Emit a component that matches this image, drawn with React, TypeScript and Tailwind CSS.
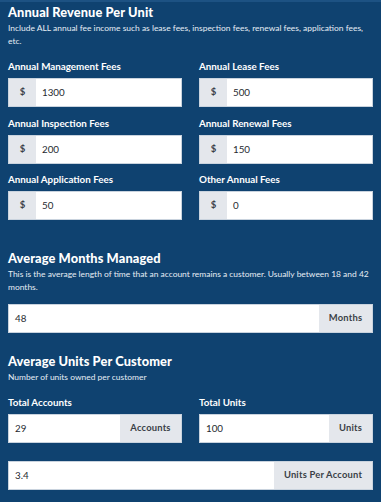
import React from "react";

const font = { fontFamily: "Lato, 'Open Sans', sans-serif" };

function Label({ children }: { children: React.ReactNode }) {
  return <div className="text-[9.8px] font-bold text-white leading-[14px] mb-[5px]">{children}</div>;
}

function PrefixInput({ value }: { value: string }) {
  return (
    <div className="flex h-[29px] border border-[#c9d3de] bg-white">
      <div className="w-[27px] bg-[#e4e7ec] flex items-center justify-center text-[9.5px] font-bold text-[#3a3f47]">$</div>
      <div className="flex-1 flex items-center pl-[6px] text-[9.8px] text-[#262a30]">{value}</div>
    </div>
  );
}

function SuffixInput({ value, suffix, sw }: { value: string; suffix: string; sw: string }) {
  return (
    <div className="flex h-[29px] border border-[#c9d3de] bg-white">
      <div className="flex-1 flex items-center pl-[6px] text-[9.8px] text-[#262a30]">{value}</div>
      <div className={`${sw} bg-[#e4e7ec] flex items-center justify-center text-[9.4px] font-bold text-[#3a3f47] tracking-[0.2px]`}>{suffix}</div>
    </div>
  );
}

function Heading({ children, className }: { children: React.ReactNode; className: string }) {
  return <h2 className={`text-[12.8px] font-black text-white leading-[20px] tracking-[0.1px] ${className}`}>{children}</h2>;
}

function Desc({ children }: { children: React.ReactNode }) {
  return <p className="text-[8.45px] text-[#e6edf5] leading-[13px]">{children}</p>;
}

export default function App() {
  return (
    <div style={font} className="w-[381px] h-[502px] bg-[#0f4270] border-t-2 border-[#1d5283] px-2 overflow-hidden">
      <Heading className="">Annual Revenue Per Unit</Heading>
      <Desc>
        Include ALL annual fee income such as lease fees, inspection fees, renewal fees, application fees, etc.
      </Desc>
      <div className="grid grid-cols-2 gap-x-[17px] gap-y-[8.5px] mt-[11px]">
        <div>
          <Label>Annual Management Fees</Label>
          <PrefixInput value="1300" />
        </div>
        <div>
          <Label>Annual Lease Fees</Label>
          <PrefixInput value="500" />
        </div>
        <div>
          <Label>Annual Inspection Fees</Label>
          <PrefixInput value="200" />
        </div>
        <div>
          <Label>Annual Renewal Fees</Label>
          <PrefixInput value="150" />
        </div>
        <div>
          <Label>Annual Application Fees</Label>
          <PrefixInput value="50" />
        </div>
        <div>
          <Label>Other Annual Fees</Label>
          <PrefixInput value="0" />
        </div>
      </div>

      <Heading className="mt-[27.5px]">Average Months Managed</Heading>
      <Desc>
        This is the average length of time that an account remains a customer. Usually between 18 and 42 months.
      </Desc>
      <div className="mt-[10px]">
        <SuffixInput value="48" suffix="Months" sw="w-[53px]" />
      </div>

      <Heading className="mt-[18.5px]">Average Units Per Customer</Heading>
      <Desc>Number of units owned per customer</Desc>
      <div className="grid grid-cols-2 gap-x-[17px] mt-[11px]">
        <div>
          <Label>Total Accounts</Label>
          <SuffixInput value="29" suffix="Accounts" sw="w-[61px]" />
        </div>
        <div>
          <Label>Total Units</Label>
          <SuffixInput value="100" suffix="Units" sw="w-[43px]" />
        </div>
      </div>
      <div className="mt-[17.5px]">
        <SuffixInput value="3.4" suffix="Units Per Account" sw="w-[98px]" />
      </div>
    </div>
  );
}
